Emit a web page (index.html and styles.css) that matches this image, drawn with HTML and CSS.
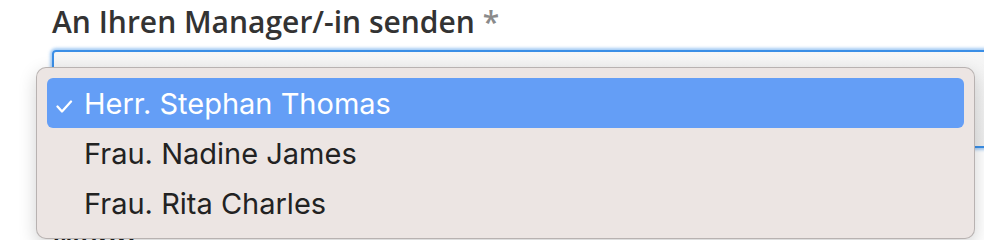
FILE: index.html
```html
<!DOCTYPE html>
<html lang="de">
<head>
<meta charset="utf-8">
<title>Manager auswählen</title>
<link rel="stylesheet" href="styles.css">
</head>
<body>
<div class="form">
  <div class="field">
    <label class="label">An Ihren Manager/-in senden <span class="req">*</span></label>
    <div class="select-box"></div>
  </div>
  <div class="field next">
    <span class="label">Wenn</span>
  </div>
  <div class="popup">
    <div class="option selected">
      <svg class="check" viewBox="0 0 17 13" width="17" height="13"><polyline points="1.5,6.5 6,11.5 15,1.5" fill="none" stroke="#fff" stroke-width="2.3" stroke-linecap="round" stroke-linejoin="round"/></svg>
      <span>Herr. Stephan Thomas</span>
    </div>
    <div class="option"><span>Frau. Nadine James</span></div>
    <div class="option"><span>Frau. Rita Charles</span></div>
  </div>
</div>
</body>
</html>
```

FILE: styles.css
```css
html, body {
  margin: 0;
  padding: 0;
  background: #fff;
  overflow: hidden;
}
body {
  width: 984px;
  height: 240px;
}
.form {
  position: relative;
  height: 240px;
  overflow: hidden;
  padding-left: 52px;
  font-family: "Open Sans", "Noto Sans", sans-serif;
}
.field {
  display: flex;
  flex-direction: column;
}
.label {
  font-size: 30px;
  font-weight: 600;
  line-height: 42px;
  color: #333;
  margin-top: 1px;
}
.req {
  color: #8a8a8a;
}
.select-box {
  margin-top: 7px;
  height: 94px;
  margin-right: -20px;
  border: 2px solid #3a8ee6;
  border-radius: 4px;
  background: linear-gradient(#f6f6f6, #ededed);
  box-shadow: 0 0 3px 2px rgba(58, 142, 230, 0.45);
}
.next {
  margin-top: 71px;
}
.next .label {
  color: #222;
}
.popup {
  position: absolute;
  left: 36px;
  top: 67px;
  width: 917px;
  padding: 10px;
  background: #ece5e3;
  border: 1px solid rgba(0, 0, 0, 0.22);
  border-radius: 10px;
  box-shadow: 0 6px 18px rgba(0, 0, 0, 0.18);
  font-family: Inter, "Liberation Sans", sans-serif;
  display: flex;
  flex-direction: column;
}
.option {
  height: 50px;
  display: flex;
  align-items: center;
  padding-left: 37px;
  position: relative;
  font-size: 29px;
  color: #222;
  border-radius: 6px;
}
.option.selected {
  background: #649ef6;
  color: #fff;
}
.check {
  position: absolute;
  left: 9px;
  top: 22px;
}
```
